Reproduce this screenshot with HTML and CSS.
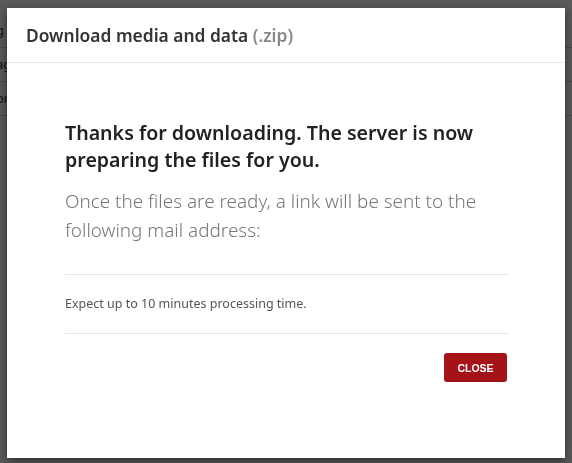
FILE: index.html
```html
<!DOCTYPE html>
<html lang="en">
<head>
  <meta charset="UTF-8" />
  <meta name="viewport" content="width=device-width, initial-scale=1.0" />
  <title>Download media and data</title>
  <link rel="stylesheet" href="styles.css">
</head>
<body>
  <div class="page">
    <div class="row">g</div>
    <div class="row">ag</div>
    <div class="row">on</div>
  </div>

  <div class="overlay">
    <div class="modal">
      <div class="modal-header">
        <h3>Download media and data <span class="muted">(.zip)</span></h3>
      </div>
      <div class="modal-body">
        <h2>Thanks for downloading. The server is now preparing the files for you.</h2>
        <p class="lead">Once the files are ready, a link will be sent to the following mail address:</p>
        <div class="note">Expect up to 10 minutes processing time.</div>
        <div class="actions">
          <button class="btn-close">Close</button>
        </div>
      </div>
    </div>
  </div>
</body>
</html>
```

FILE: styles.css
```css
html, body {
  height: 100%;
}
body {
  margin: 0;
  font-family: "Noto Sans", "Open Sans", sans-serif;
  background: #fff;
  overflow: hidden;
}
.page {
  padding-top: 14px;
}
.row {
  height: 33px;
  line-height: 33px;
  border-bottom: 1px solid #ccc;
  font-size: 13px;
  color: #333;
  margin-left: -4px;
}
.overlay {
  position: fixed;
  inset: 0;
  background: rgba(0, 0, 0, 0.65);
  padding: 8px 7px 0 7px;
}
.modal {
  background: #fff;
  width: 558px;
  height: 450px;
  box-shadow: 0 3px 9px rgba(0, 0, 0, 0.5);
}
.modal-header {
  height: 54px;
  border-bottom: 1px solid #e5e5e5;
  padding: 0 19px;
  display: flex;
  align-items: center;
}
.modal-header h3 {
  margin: 0;
  font-size: 17.4px;
  font-weight: 600;
  color: #333;
}
.modal-header .muted {
  color: #888;
}
.modal-body {
  padding: 56px 58px 0 58px;
}
.modal-body h2 {
  margin: 0;
  font-size: 19.6px;
  line-height: 27px;
  font-weight: 600;
  color: #222;
}
.lead {
  margin: 14px 0 0;
  font-size: 18.9px;
  line-height: 29px;
  font-weight: 300;
  color: #777;
}
.note {
  margin-top: 29px;
  border-top: 1px solid #e5e5e5;
  border-bottom: 1px solid #e5e5e5;
  padding: 20px 0;
  line-height: 18px;
  font-size: 12.5px;
  color: #555;
}
.actions {
  margin-top: 19px;
  display: flex;
  justify-content: flex-end;
}
.btn-close {
  background: #a51218;
  color: #fff;
  border: none;
  border-radius: 3px;
  width: 63px;
  height: 29px;
  font-family: "Liberation Sans", Arial, sans-serif;
  font-weight: bold;
  font-size: 10.5px;
  text-transform: uppercase;
  cursor: pointer;
}
```
